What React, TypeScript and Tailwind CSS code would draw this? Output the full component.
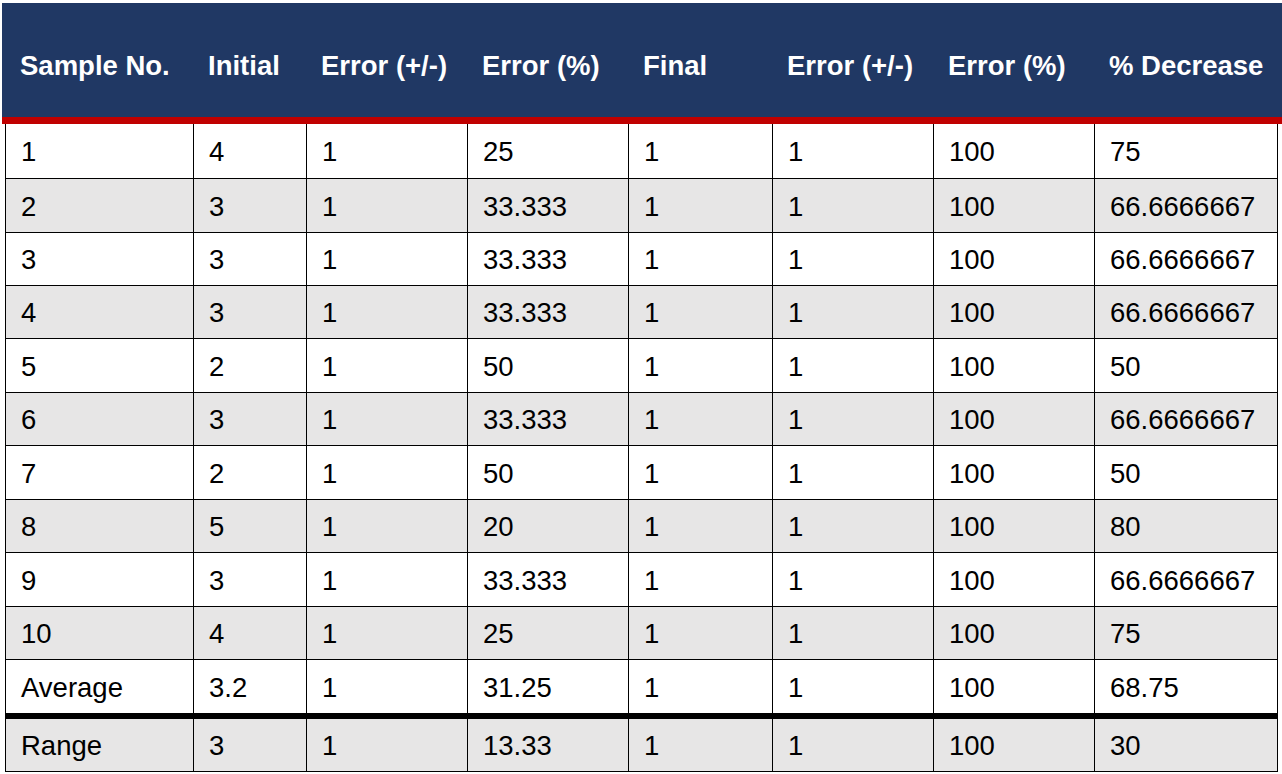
import React from "react";

const cols = "grid grid-cols-[188px_113px_161px_161px_144px_161px_161px_184px]";

const headers = [
  "Sample No.",
  "Initial",
  "Error (+/-)",
  "Error (%)",
  "Final",
  "Error (+/-)",
  "Error (%)",
  "% Decrease",
];

const rows = [
  { cells: ["1", "4", "1", "25", "1", "1", "100", "75"], h: "h-[55px]", grey: false },
  { cells: ["2", "3", "1", "33.333", "1", "1", "100", "66.6666667"], h: "h-[54px]", grey: true },
  { cells: ["3", "3", "1", "33.333", "1", "1", "100", "66.6666667"], h: "h-[53px]", grey: false },
  { cells: ["4", "3", "1", "33.333", "1", "1", "100", "66.6666667"], h: "h-[53px]", grey: true },
  { cells: ["5", "2", "1", "50", "1", "1", "100", "50"], h: "h-[54px]", grey: false },
  { cells: ["6", "3", "1", "33.333", "1", "1", "100", "66.6666667"], h: "h-[53px]", grey: true },
  { cells: ["7", "2", "1", "50", "1", "1", "100", "50"], h: "h-[54px]", grey: false },
  { cells: ["8", "5", "1", "20", "1", "1", "100", "80"], h: "h-[53px]", grey: true },
  { cells: ["9", "3", "1", "33.333", "1", "1", "100", "66.6666667"], h: "h-[54px]", grey: false },
  { cells: ["10", "4", "1", "25", "1", "1", "100", "75"], h: "h-[53px]", grey: true },
];

const Row = ({
  cells,
  h,
  grey,
  border = "border-b",
}: {
  cells: string[];
  h: string;
  grey: boolean;
  border?: string;
}) => (
  <div className={`${cols} ${h} ${border} border-black ${grey ? "bg-[#e7e6e6]" : "bg-white"}`}>
    {cells.map((c, i) => (
      <div
        key={i}
        className={`flex items-center pl-[15px] pt-[2px] border-l border-black ${i === 7 ? "border-r" : ""}`}
      >
        {c}
      </div>
    ))}
  </div>
);

export default function App() {
  return (
    <div
      className="w-[1282px] h-[774px] bg-white pt-[3px] text-[27.5px] text-black overflow-hidden"
      style={{ fontFamily: '"Liberation Sans", Arial, sans-serif' }}
    >
      <div className="ml-[2px] h-[114px] bg-[#203864] pl-[3px]">
        <div className={`${cols} h-full`}>
          {headers.map((t, i) => (
            <div key={i} className="flex items-center pl-[15px] pt-[11px] font-bold text-white">
              {t}
            </div>
          ))}
        </div>
      </div>
      <div className="ml-[2px] h-[7px] bg-[#c00000]" />
      <div className="ml-[5px] w-[1273px]">
        {rows.map((r, i) => (
          <Row key={i} cells={r.cells} h={r.h} grey={r.grey} />
        ))}
        <Row
          cells={["Average", "3.2", "1", "31.25", "1", "1", "100", "68.75"]}
          h="h-[59px]"
          grey={false}
          border="border-b-[6px]"
        />
        <Row
          cells={["Range", "3", "1", "13.33", "1", "1", "100", "30"]}
          h="h-[53px]"
          grey={true}
        />
      </div>
    </div>
  );
}
